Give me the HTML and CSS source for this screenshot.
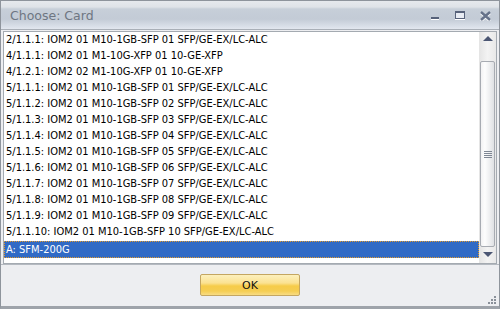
FILE: index.html
```html
<!DOCTYPE html>
<html>
<head lang="en">
    <meta charset="UTF-8">
    <title>Choose: Card</title>
    <link rel="stylesheet" href="styles.css">
</head>
<body>
    <div class="window">
        <div class="titlebar">
            <span class="title">Choose: Card</span>
            <div class="controls">
                <span class="btn-min"></span>
                <span class="btn-max"></span>
                <svg class="btn-close" width="11" height="10" viewBox="0 0 11 10">
                    <path d="M1 1 L10 9 M10 1 L1 9" stroke="#fff" stroke-width="2.6" transform="translate(0,1)"/>
                    <path d="M1 1 L10 9 M10 1 L1 9" stroke="#66728a" stroke-width="2.4"/>
                </svg>
            </div>
        </div>
        <div class="body">
            <div class="listbox">
                <ul class="list">
                    <li>2/1.1.1: IOM2 01 M10-1GB-SFP 01 SFP/GE-EX/LC-ALC</li>
                    <li>4/1.1.1: IOM2 01 M1-10G-XFP 01 10-GE-XFP</li>
                    <li>4/1.2.1: IOM2 02 M1-10G-XFP 01 10-GE-XFP</li>
                    <li>5/1.1.1: IOM2 01 M10-1GB-SFP 01 SFP/GE-EX/LC-ALC</li>
                    <li>5/1.1.2: IOM2 01 M10-1GB-SFP 02 SFP/GE-EX/LC-ALC</li>
                    <li>5/1.1.3: IOM2 01 M10-1GB-SFP 03 SFP/GE-EX/LC-ALC</li>
                    <li>5/1.1.4: IOM2 01 M10-1GB-SFP 04 SFP/GE-EX/LC-ALC</li>
                    <li>5/1.1.5: IOM2 01 M10-1GB-SFP 05 SFP/GE-EX/LC-ALC</li>
                    <li>5/1.1.6: IOM2 01 M10-1GB-SFP 06 SFP/GE-EX/LC-ALC</li>
                    <li>5/1.1.7: IOM2 01 M10-1GB-SFP 07 SFP/GE-EX/LC-ALC</li>
                    <li>5/1.1.8: IOM2 01 M10-1GB-SFP 08 SFP/GE-EX/LC-ALC</li>
                    <li>5/1.1.9: IOM2 01 M10-1GB-SFP 09 SFP/GE-EX/LC-ALC</li>
                    <li>5/1.1.10: IOM2 01 M10-1GB-SFP 10 SFP/GE-EX/LC-ALC</li>
                    <li class="selected">A: SFM-200G</li>
                </ul>
                <div class="scrollbar">
                    <div class="arrow-btn up"><span class="tri-up"></span></div>
                    <div class="track">
                        <div class="thumb"><span class="grip"></span></div>
                    </div>
                    <div class="arrow-btn down"><span class="tri-down"></span></div>
                </div>
            </div>
        </div>
        <div class="footer">
            <button class="ok">OK</button>
            <svg class="grip-corner" width="10" height="10" viewBox="0 0 10 10">
                <rect x="7" y="1" width="2" height="2" fill="#8a9099"/>
                <rect x="4" y="4" width="2" height="2" fill="#8a9099"/>
                <rect x="7" y="4" width="2" height="2" fill="#8a9099"/>
                <rect x="1" y="7" width="2" height="2" fill="#8a9099"/>
                <rect x="4" y="7" width="2" height="2" fill="#8a9099"/>
                <rect x="7" y="7" width="2" height="2" fill="#8a9099"/>
            </svg>
        </div>
    </div>
</body>
</html>
```

FILE: styles.css
```css
* {
    margin: 0;
    padding: 0;
    box-sizing: border-box;
}
body {
    width: 500px;
    height: 309px;
    overflow: hidden;
    font-family: "DejaVu Sans Condensed", "DejaVu Sans", sans-serif;
    font-size: 11px;
    background: #eceef1;
}
.window {
    width: 500px;
    height: 309px;
    border: 1px solid #8e949c;
    border-bottom: 3px solid #9ea3aa;
    background: #edeef1;
    display: flex;
    flex-direction: column;
}
.titlebar {
    height: 28px;
    flex: none;
    display: flex;
    align-items: center;
    justify-content: space-between;
    padding-left: 9px;
    background: linear-gradient(#e6e9ed 0, #dfe3e8 6px, #c7cfd9 8px, #c3cbd6 18px, #dbe1ea 26px, #e2e7ef 28px);
}
.title {
    font-family: "DejaVu Sans", sans-serif;
    font-size: 12.5px;
    color: #6e7682;
    padding-top: 1px;
}
.controls {
    display: flex;
    align-items: center;
    gap: 0;
    padding-right: 8px;
}
.btn-min {
    width: 8px;
    height: 2px;
    background: #57627a;
    box-shadow: 0 1px 0 #fff;
    margin-top: 5px;
    margin-right: 16px;
}
.btn-max {
    width: 10px;
    height: 8px;
    border: 1px solid #57627a;
    border-top-width: 2px;
    background: #e8ecf3;
    box-shadow: 0 1px 0 #fff;
    margin-right: 15px;
    margin-top: 0px;
}
.btn-close {
    display: block;
    margin-top: 1px;
}
.body {
    flex: none;
    padding: 1px 2px 0 2px;
    border-top: 1px solid #a9afb7;
}
.listbox {
    height: 233px;
    border: 1px solid #a4aab1;
    background: #fff;
    display: flex;
}
.list {
    list-style: none;
    flex: 1;
    padding-top: 0;
}
.list li {
    height: 16px;
    line-height: 16px;
    padding-left: 2px;
    color: #000;
    white-space: nowrap;
}
.list li.selected {
    background: #316ac5;
    color: #fff;
    outline: 1px dotted #e49a2c;
    outline-offset: -1px;
    margin-top: 1px;
    height: 17px;
    line-height: 17px;
}
.scrollbar {
    width: 17px;
    flex: none;
    display: flex;
    flex-direction: column;
    background: linear-gradient(90deg, #e4e4e4, #f3f3f3 50%, #e8e8e8);
}
.arrow-btn {
    flex: none;
    display: flex;
    justify-content: center;
}
.arrow-btn.up {
    height: 29px;
    padding-top: 4px;
}
.arrow-btn.down {
    height: 15px;
    padding-top: 4px;
}
.tri-up {
    width: 0;
    height: 0;
    border-left: 5px solid transparent;
    border-right: 5px solid transparent;
    border-bottom: 5px solid #4b5673;
}
.tri-down {
    width: 0;
    height: 0;
    border-left: 5px solid transparent;
    border-right: 5px solid transparent;
    border-top: 5px solid #4b5673;
}
.track {
    flex: 1;
    padding: 0 1px 1px 1px;
    display: flex;
}
.thumb {
    flex: 1;
    border: 1px solid #a7abb2;
    border-radius: 2px;
    background: linear-gradient(90deg, #f2f2f3, #fdfdfd 30%, #dfe1e4);
    display: flex;
    align-items: center;
    justify-content: center;
}
.grip {
    width: 8px;
    height: 7px;
    background: repeating-linear-gradient(#7f8794 0, #7f8794 1px, transparent 1px, transparent 2px);
}
.footer {
    flex: 1;
    border-top: 1px solid #b4b9c0;
    display: flex;
    justify-content: center;
    align-items: flex-start;
    padding-top: 9px;
    position: relative;
}
.ok {
    width: 100px;
    height: 22px;
    border: 1px solid #c4a661;
    border-radius: 2px;
    background: linear-gradient(#fdf0bd 0, #fbe292 40%, #f6cc4a 55%, #f5cd52 80%, #f8dc84 100%);
    font-family: "DejaVu Sans", sans-serif;
    font-size: 11px;
    color: #111;
}
.grip-corner {
    position: absolute;
    right: 2px;
    bottom: 1px;
}
```
